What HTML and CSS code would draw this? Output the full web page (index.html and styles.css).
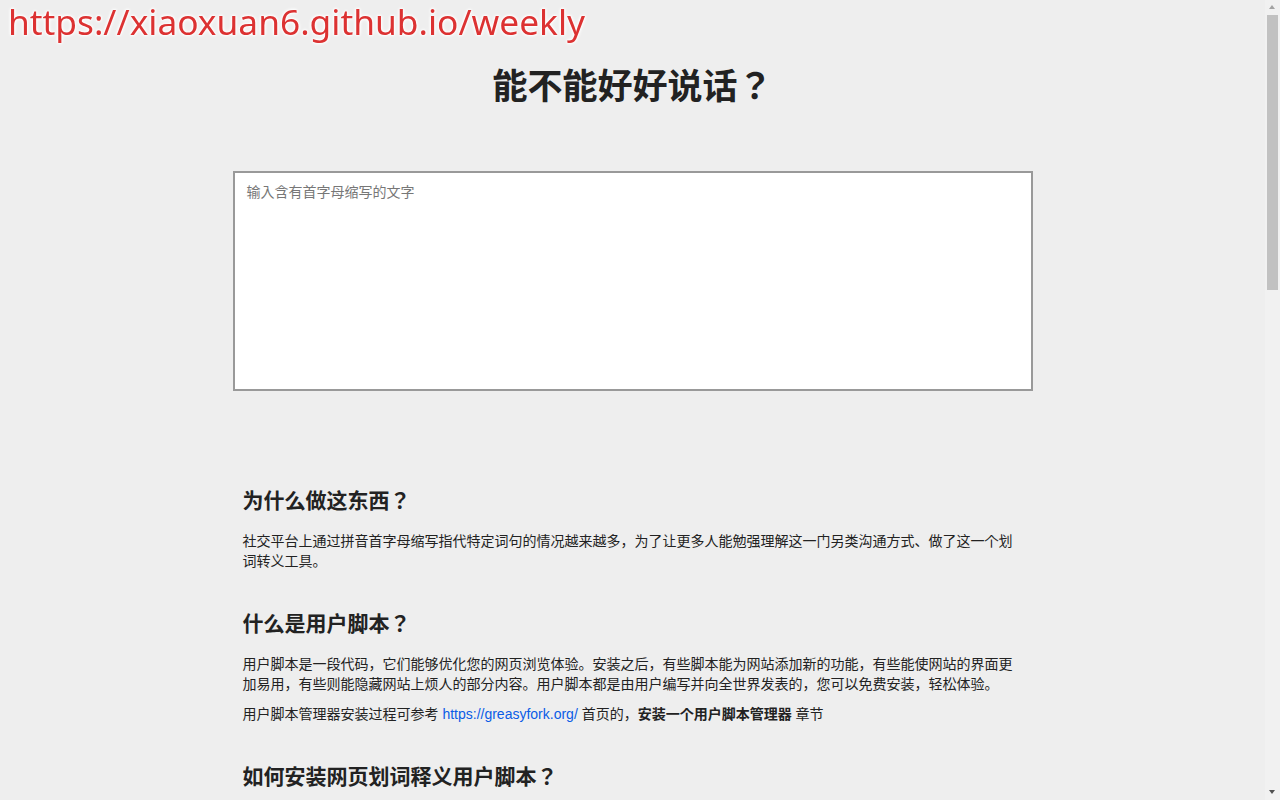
FILE: index.html
```html
<!DOCTYPE html>
<html>
<head>
<meta charset="utf-8">
<title>能不能好好说话？</title>
<link rel="stylesheet" href="styles.css">
</head>
<body>
<div class="banner">https://xiaoxuan6.github.io/weekly</div>
<div class="scrollbar">
  <span class="sb-up"></span>
  <span class="sb-thumb"></span>
  <span class="sb-down"></span>
</div>
<main class="wrap">
  <h1 class="title">能不能好好说话？</h1>
  <textarea class="input" placeholder="输入含有首字母缩写的文字"></textarea>
  <div class="result"></div>
  <section class="sec">
    <h2 class="sec-title">为什么做这东西？</h2>
    <p class="text">社交平台上通过拼音首字母缩写指代特定词句的情况越来越多，为了让更多人能勉强理解这一门另类沟通方式、做了这一个划词转义工具。</p>
  </section>
  <section class="sec">
    <h2 class="sec-title">什么是用户脚本？</h2>
    <p class="text">用户脚本是一段代码，它们能够优化您的网页浏览体验。安装之后，有些脚本能为网站添加新的功能，有些能使网站的界面更加易用，有些则能隐藏网站上烦人的部分内容。用户脚本都是由用户编写并向全世界发表的，您可以免费安装，轻松体验。</p>
    <p class="text">用户脚本管理器安装过程可参考 <a class="link" href="#">https://greasyfork.org/</a> 首页的，<b>安装一个用户脚本管理器</b> 章节</p>
  </section>
  <section class="sec">
    <h2 class="sec-title">如何安装网页划词释义用户脚本？</h2>
    <p class="text">安装好用户脚本管理器后，点击下方链接即可安装本脚本。安装完成后刷新页面，在任意网页中选中含有首字母缩写的文字，即可看到释义。</p>
    <p class="text"><a class="link" href="#">https://github.com/itorr/nbnhhsh</a></p>
    <p class="text">脚本支持绝大多数网站，如果在某些网站上无法使用，请检查脚本管理器是否已经启用本脚本。</p>
  </section>
  <section class="sec">
    <h2 class="sec-title">如何使用？</h2>
    <p class="text">在上方的输入框中输入含有首字母缩写的文字，即可自动识别其中的缩写并给出可能的释义。</p>
    <p class="text">如果没有找到合适的释义，可以点击提交按钮，为这个缩写添加新的词条，帮助更多人理解。</p>
  </section>
  <section class="sec">
    <h2 class="sec-title">数据来源</h2>
    <p class="text">词条数据均由网友提交，经过审核后收录。内容仅供参考，不代表本站观点。</p>
    <p class="text">如发现不恰当的释义，欢迎反馈，我们会尽快处理。</p>
  </section>
  <section class="sec">
    <h2 class="sec-title">相关链接</h2>
    <p class="text">微博 <a class="link" href="#">https://weibo.com/</a></p>
    <p class="text">项目地址 <a class="link" href="#">https://github.com/itorr/nbnhhsh</a></p>
  </section>
  <footer class="foot">
    <p class="text">© 能不能好好说话</p>
  </footer>
</main>
</body>
</html>
```
FILE: styles.css
```css
html, body {
  margin: 0;
  padding: 0;
}
body {
  margin-right: 15px;
  background: #eeeeee;
  color: #222222;
  font-family: "Liberation Sans", "Noto Sans CJK JP", sans-serif;
  font-size: 14px;
  line-height: 20px;
}
.banner {
  position: fixed;
  top: -2px;
  left: 8px;
  z-index: 10;
  font-family: "Noto Sans", "Open Sans", sans-serif;
  font-size: 35.3px;
  line-height: 46px;
  color: #dc3232;
  text-shadow: 0 0 2px #fff, 0 0 2px #fff, 0 0 3px #fff, 0 0 4px #fff;
}
.scrollbar {
  position: fixed;
  top: 0;
  right: 0;
  width: 15px;
  height: 100%;
  background: #f1f1f1;
  z-index: 20;
}
.sb-up, .sb-down {
  position: absolute;
  left: 4px;
  width: 0;
  height: 0;
  border-left: 3.5px solid transparent;
  border-right: 3.5px solid transparent;
}
.sb-up {
  top: 5px;
  border-bottom: 4px solid #a3a3a3;
}
.sb-down {
  bottom: 6px;
  border-top: 4px solid #505050;
}
.sb-thumb {
  position: absolute;
  top: 15px;
  left: 2px;
  width: 11px;
  height: 275px;
  background: #c1c1c1;
}
.wrap {
  width: 800px;
  margin: 0 auto;
  padding-bottom: 760px;
}
.title {
  margin: 65px 0 0;
  font-size: 35px;
  line-height: 44px;
  text-align: center;
  font-weight: bold;
  color: #222;
}
.input {
  display: block;
  box-sizing: border-box;
  width: 800px;
  height: 220px;
  margin: 62px 0 0;
  padding: 9px 12px;
  border: 2px solid #999999;
  background: #fff;
  font-family: "Liberation Sans", "Noto Sans CJK JP", sans-serif;
  font-size: 14px;
  line-height: 20px;
  resize: none;
  outline: none;
}
.input::placeholder {
  color: #777;
}
.result {
  height: 95px;
}
.sec {
  padding: 0 10px;
  margin-bottom: 38px;
}
.sec-title {
  margin: 0 0 15px;
  font-size: 21px;
  line-height: 30px;
  font-weight: bold;
}
.text {
  margin: 0 0 10px;
}
.link {
  color: #0a5ce6;
  text-decoration: none;
}
.foot {
  padding: 0 10px;
  color: #888;
}
```
